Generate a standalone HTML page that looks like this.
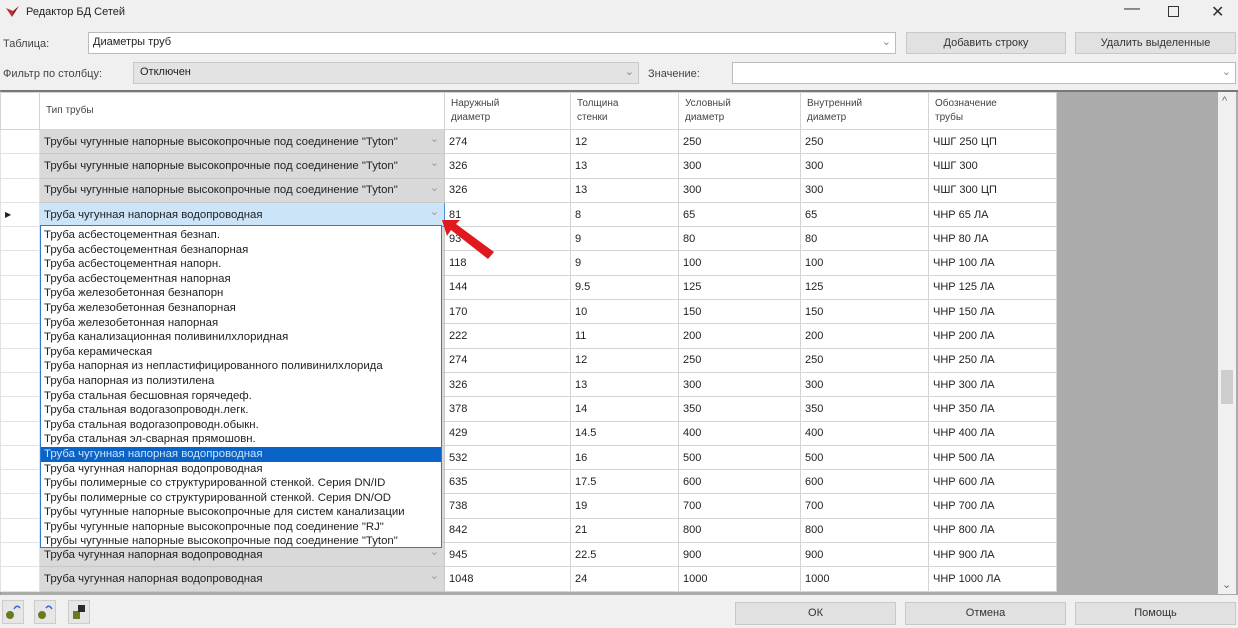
<!DOCTYPE html>
<html><head><meta charset="utf-8"><style>
*{box-sizing:border-box;margin:0;padding:0}
body{width:1238px;height:628px;background:#f0f0f0;font-family:"Liberation Sans","DejaVu Sans",sans-serif;font-size:11px;color:#222;position:relative;overflow:hidden}
.a{position:absolute}
.btn{position:absolute;background:#e1e1e1;border:1px solid #c8c8c8;text-align:center;line-height:20px;color:#333}
table{border-collapse:collapse;table-layout:fixed}
td{border:1px solid #d4d4d4;height:24.3px;padding:0 4px;white-space:nowrap;overflow:hidden;background:#fff;font-size:11px}
td.rh{background:#fff;border-color:#e2e2e2}
td.ty{background:#d9d9d9;border-color:#c8c8c8;position:relative;font-size:11.4px}
td.ty:after{content:"⌄";position:absolute;right:5px;top:2px;color:#999;font-size:11px}
th{font-weight:normal;text-align:left;vertical-align:middle;border:1px solid #d4d4d4;padding:0 6px;height:37px;background:#fff;font-size:10px;line-height:14px;color:#444}
.dd{position:absolute;left:40px;top:225px;width:402px;height:323px;background:#fff;border:1px solid #2d7ad0;font-size:11.4px;padding-top:2px}
.dd div{height:14.6px;line-height:14.6px;padding-left:3px;white-space:nowrap}
.dd .s{background:#0a64c8;color:#cfe2f7}
</style></head><body>
<div class="a" style="left:6px;top:6px;width:14px;height:12px">
<svg width="14" height="12"><path d="M0 2 L6 11 L7 5Z" fill="#c52b2b"/><path d="M7 5 L6 11 L13 0Z" fill="#8c1c2c"/></svg></div>
<div class="a" style="left:26px;top:6px;font-size:11px">Редактор БД Сетей</div>
<div class="a" style="left:1124px;top:0;font-size:16px;color:#333">—</div>
<div class="a" style="left:1168px;top:6px;width:11px;height:11px;border:1px solid #333"></div>
<div class="a" style="left:1211px;top:2px;font-size:16px;color:#333">✕</div>

<div class="a" style="left:3px;top:38px;color:#444">Таблица:</div>
<div class="a" style="left:88px;top:32px;width:808px;height:22px;background:#fff;border:1px solid #bbb;padding:3px 4px">Диаметры труб<span style="position:absolute;right:4px;top:2px;color:#888">⌄</span></div>
<div class="btn" style="left:906px;top:32px;width:160px;height:22px">Добавить строку</div>
<div class="btn" style="left:1075px;top:32px;width:161px;height:22px">Удалить выделенные</div>

<div class="a" style="left:3px;top:68px;color:#444">Фильтр по столбцу:</div>
<div class="a" style="left:133px;top:62px;width:506px;height:22px;background:#e3e3e3;border:1px solid #c8c8c8;padding:3px 6px">Отключен<span style="position:absolute;right:4px;top:2px;color:#888">⌄</span></div>
<div class="a" style="left:648px;top:68px;color:#444">Значение:</div>
<div class="a" style="left:732px;top:62px;width:504px;height:22px;background:#fff;border:1px solid #bbb"><span style="position:absolute;right:4px;top:2px;color:#888">⌄</span></div>

<div class="a" style="left:0;top:90px;width:1238px;height:505px;background:#ababab;border-top:2px solid #777;border-left:1px solid #999"></div>
<div class="a" style="left:1218px;top:92px;width:18px;height:502px;background:#f0f0f0"><div style="position:absolute;left:4px;top:3px;color:#666">^</div><div style="position:absolute;left:3px;top:278px;width:12px;height:34px;background:#cdcdcd"></div><div style="position:absolute;left:4px;bottom:3px;color:#666">⌄</div></div>
<table class="a" style="left:0;top:92px;width:1057px">
<colgroup><col style="width:39px"><col style="width:405px"><col style="width:126px"><col style="width:108px"><col style="width:122px"><col style="width:128px"><col style="width:128px"></colgroup>
<tr><th></th><th>Тип трубы</th><th>Наружный<br>диаметр</th><th>Толщина<br>стенки</th><th>Условный<br>диаметр</th><th>Внутренний<br>диаметр</th><th>Обозначение<br>трубы</th></tr>
<tr><td class="rh"></td><td class="ty">Трубы чугунные напорные высокопрочные под соединение "Tyton"</td><td>274</td><td>12</td><td>250</td><td>250</td><td>ЧШГ 250 ЦП</td></tr>
<tr><td class="rh"></td><td class="ty">Трубы чугунные напорные высокопрочные под соединение "Tyton"</td><td>326</td><td>13</td><td>300</td><td>300</td><td>ЧШГ 300</td></tr>
<tr><td class="rh"></td><td class="ty">Трубы чугунные напорные высокопрочные под соединение "Tyton"</td><td>326</td><td>13</td><td>300</td><td>300</td><td>ЧШГ 300 ЦП</td></tr>
<tr><td class="rh" style="font-size:8px">▶</td><td class="ty" style="background:#cce4f7;border:1px solid #4a90d9">Труба чугунная напорная водопроводная</td><td>81</td><td>8</td><td>65</td><td>65</td><td>ЧНР 65 ЛА</td></tr>
<tr><td class="rh"></td><td class="ty"></td><td>93</td><td>9</td><td>80</td><td>80</td><td>ЧНР 80 ЛА</td></tr>
<tr><td class="rh"></td><td class="ty"></td><td>118</td><td>9</td><td>100</td><td>100</td><td>ЧНР 100 ЛА</td></tr>
<tr><td class="rh"></td><td class="ty"></td><td>144</td><td>9.5</td><td>125</td><td>125</td><td>ЧНР 125 ЛА</td></tr>
<tr><td class="rh"></td><td class="ty"></td><td>170</td><td>10</td><td>150</td><td>150</td><td>ЧНР 150 ЛА</td></tr>
<tr><td class="rh"></td><td class="ty"></td><td>222</td><td>11</td><td>200</td><td>200</td><td>ЧНР 200 ЛА</td></tr>
<tr><td class="rh"></td><td class="ty"></td><td>274</td><td>12</td><td>250</td><td>250</td><td>ЧНР 250 ЛА</td></tr>
<tr><td class="rh"></td><td class="ty"></td><td>326</td><td>13</td><td>300</td><td>300</td><td>ЧНР 300 ЛА</td></tr>
<tr><td class="rh"></td><td class="ty"></td><td>378</td><td>14</td><td>350</td><td>350</td><td>ЧНР 350 ЛА</td></tr>
<tr><td class="rh"></td><td class="ty"></td><td>429</td><td>14.5</td><td>400</td><td>400</td><td>ЧНР 400 ЛА</td></tr>
<tr><td class="rh"></td><td class="ty"></td><td>532</td><td>16</td><td>500</td><td>500</td><td>ЧНР 500 ЛА</td></tr>
<tr><td class="rh"></td><td class="ty"></td><td>635</td><td>17.5</td><td>600</td><td>600</td><td>ЧНР 600 ЛА</td></tr>
<tr><td class="rh"></td><td class="ty"></td><td>738</td><td>19</td><td>700</td><td>700</td><td>ЧНР 700 ЛА</td></tr>
<tr><td class="rh"></td><td class="ty"></td><td>842</td><td>21</td><td>800</td><td>800</td><td>ЧНР 800 ЛА</td></tr>
<tr><td class="rh"></td><td class="ty">Труба чугунная напорная водопроводная</td><td>945</td><td>22.5</td><td>900</td><td>900</td><td>ЧНР 900 ЛА</td></tr>
<tr><td class="rh"></td><td class="ty">Труба чугунная напорная водопроводная</td><td>1048</td><td>24</td><td>1000</td><td>1000</td><td>ЧНР 1000 ЛА</td></tr>
</table>
<div class="dd">
<div>Труба асбестоцементная безнап.</div>
<div>Труба асбестоцементная безнапорная</div>
<div>Труба асбестоцементная напорн.</div>
<div>Труба асбестоцементная напорная</div>
<div>Труба железобетонная безнапорн</div>
<div>Труба железобетонная безнапорная</div>
<div>Труба железобетонная напорная</div>
<div>Труба канализационная поливинилхлоридная</div>
<div>Труба керамическая</div>
<div>Труба напорная из непластифицированного поливинилхлорида</div>
<div>Труба напорная из полиэтилена</div>
<div>Труба стальная бесшовная горячедеф.</div>
<div>Труба стальная водогазопроводн.легк.</div>
<div>Труба стальная водогазопроводн.обыкн.</div>
<div>Труба стальная эл-сварная прямошовн.</div>
<div class="s">Труба чугунная напорная водопроводная</div>
<div>Труба чугунная напорная водопроводная</div>
<div>Трубы полимерные со структурированной стенкой. Серия DN/ID</div>
<div>Трубы полимерные со структурированной стенкой. Серия DN/OD</div>
<div>Трубы чугунные напорные высокопрочные для систем канализации</div>
<div>Трубы чугунные напорные высокопрочные под соединение "RJ"</div>
<div>Трубы чугунные напорные высокопрочные под соединение "Tyton"</div>
</div>
<svg class="a" style="left:436px;top:210px" width="64" height="52"><path d="M6 10 L24 10 L20 14 L58 42 L52 49 L15 20 L11 26 Z" fill="#e0191f"/></svg>

<div class="a" style="left:2px;top:600px;width:22px;height:24px;border:1px solid #ccc;background:#e6e6e6"><svg width="20" height="22"><circle cx="7" cy="14" r="4" fill="#6a7a20"/><path d="M11 8 Q14 3 17 7" stroke="#3a6ad0" fill="none" stroke-width="1.5"/></svg></div>
<div class="a" style="left:34px;top:600px;width:22px;height:24px;border:1px solid #ccc;background:#e6e6e6"><svg width="20" height="22"><circle cx="7" cy="14" r="4" fill="#6a7a20"/><path d="M11 7 Q14 3 17 8" stroke="#3a6ad0" fill="none" stroke-width="1.5"/></svg></div>
<div class="a" style="left:68px;top:600px;width:22px;height:24px;border:1px solid #ccc;background:#e6e6e6"><svg width="20" height="22"><rect x="4" y="10" width="7" height="8" fill="#6a7a20"/><rect x="9" y="4" width="7" height="7" fill="#2a2a2a"/></svg></div>
<div class="btn" style="left:735px;top:602px;width:161px;height:23px">ОК</div>
<div class="btn" style="left:905px;top:602px;width:161px;height:23px">Отмена</div>
<div class="btn" style="left:1075px;top:602px;width:161px;height:23px">Помощь</div>
</body></html>
